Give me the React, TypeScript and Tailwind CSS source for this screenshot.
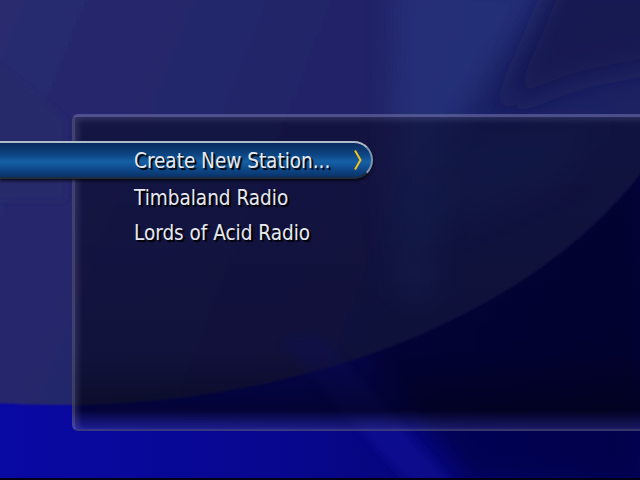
import React from "react";

const font = {
  fontFamily: '"Liberation Sans Narrow", "DejaVu Sans Condensed", "Roboto Condensed", "Liberation Sans", sans-serif',
};

function Background() {
  return (
    <svg className="absolute inset-0" width="640" height="480" viewBox="0 0 640 480">
      <defs>
        <linearGradient id="ell" x1="0" y1="0" x2="1" y2="0.25">
          <stop offset="0" stopColor="#47466f" />
          <stop offset="0.35" stopColor="#34336f" />
          <stop offset="0.6" stopColor="#27296e" />
          <stop offset="1" stopColor="#1d2062" />
        </linearGradient>
        <linearGradient id="blue" x1="0" y1="0" x2="1" y2="0">
          <stop offset="0" stopColor="#0909a4" />
          <stop offset="0.45" stopColor="#07078e" />
          <stop offset="1" stopColor="#03035a" />
        </linearGradient>
        <filter id="blur12" filterUnits="userSpaceOnUse" x="-100" y="-100" width="840" height="680">
          <feGaussianBlur stdDeviation="14" />
        </filter>
        <filter id="blur8" filterUnits="userSpaceOnUse" x="-100" y="-100" width="840" height="680">
          <feGaussianBlur stdDeviation="10" />
        </filter>
        <filter id="blur4" filterUnits="userSpaceOnUse" x="-100" y="-100" width="840" height="680">
          <feGaussianBlur stdDeviation="5" />
        </filter>
        <filter id="blur3" filterUnits="userSpaceOnUse" x="-100" y="-100" width="840" height="680">
          <feGaussianBlur stdDeviation="3" />
        </filter>
        <filter id="blur1" filterUnits="userSpaceOnUse" x="-100" y="-100" width="840" height="680">
          <feGaussianBlur stdDeviation="1.2" />
        </filter>
      </defs>
      <rect width="640" height="480" fill="url(#blue)" />
      {/* dark diagonal region lower right */}
      <path d="M330 300 L640 180 L640 480 L470 480 Z" fill="#020240" opacity="0.6" filter="url(#blur8)" />
      <ellipse cx="60" cy="-11" rx="648" ry="416" fill="url(#ell)" filter="url(#blur1)" />
      {/* bright vertical band */}
      <path d="M395 -20 L560 -20 L500 60 L460 120 L440 200 L430 300 L400 300 L390 200 Z" fill="#25347f" opacity="0.7" filter="url(#blur12)" />
      {/* light area near arc right */}
      <path d="M420 240 L560 180 L600 120 L470 130 L420 200 Z" fill="#24307a" opacity="0.45" filter="url(#blur12)" />
      {/* darker top right */}
      <path d="M560 -30 L680 -30 L680 60 L580 80 L500 110 Z" fill="#13154c" opacity="0.7" filter="url(#blur12)" />
      {/* lower-left darker wedge */}
      <path d="M-10 60 Q30 90 65 120 L65 200 L-10 200 Z" fill="#28296a" opacity="0.9" filter="url(#blur3)" />
      {/* diagonal streak crossing bottom */}
      <path d="M280 340 L320 335 L460 490 L415 490 Z" fill="#1a1ab4" opacity="0.3" filter="url(#blur4)" />
      <rect x="0" y="478" width="640" height="2" fill="#000018" />
    </svg>
  );
}

function Chevron() {
  return (
    <svg width="10" height="22" viewBox="0 0 10 22">
      <path d="M2 1.5 L7.5 11 L2 20.5" fill="none" stroke="#f4c21c" strokeWidth="2" />
    </svg>
  );
}

export default function App() {
  const items = ["Timbaland Radio", "Lords of Acid Radio"];
  return (
    <div className="relative w-[640px] h-[480px] overflow-hidden bg-[#0808a0]" style={font}>
      <Background />
      <div className="relative pt-[114px] pl-[72px]">
        <div className="h-[317px] w-[600px] rounded-l-[6px] bg-[linear-gradient(to_bottom,rgba(6,6,30,0.5),rgba(4,4,24,0.55)_75%,rgba(2,2,16,0.7)_94%,rgba(60,60,130,0.4))] border-t-[3px] border-l-[3px] border-b-[2px] border-[rgba(150,150,200,0.35)] shadow-[inset_3px_3px_6px_rgba(180,180,220,0.18)]">
          <div className="pt-[24px] flex flex-col">
            <div className="-ml-[75px] w-[373px] h-[38px] flex items-center rounded-r-full border-2 border-l-0 border-t-[#aebccc] border-r-[#7f93aa] border-b-[#1f2c40] bg-[linear-gradient(to_bottom,#082a5e_0%,#0d4684_35%,#1660a6_55%,#0d4586_80%,#0a3266_100%)] shadow-[0_2px_3px_rgba(0,0,0,0.7)]">
              <span className="pl-[134px] text-[20.5px] leading-none text-[#e6e8ee] [text-shadow:2px_2px_1px_#000] pt-[3px]">
                Create New Station...
              </span>
              <span className="ml-auto mr-[8px] flex items-center">
                <Chevron />
              </span>
            </div>
            {items.map((t) => (
              <div key={t} className="h-[35px] flex items-center pl-[59px]">
                <span className="text-[20.5px] leading-none text-[#e6e8ee] [text-shadow:2px_2px_1px_#000] pt-[3px]">{t}</span>
              </div>
            ))}
          </div>
        </div>
      </div>
    </div>
  );
}
